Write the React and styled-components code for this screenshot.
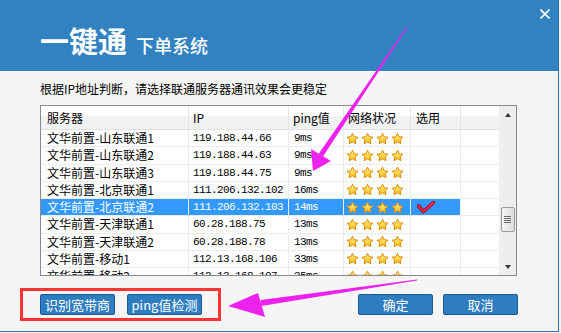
import React from 'react'
import styled, { createGlobalStyle } from 'styled-components'

const blue = '#3282c1'
const cjk = '"Noto Sans CJK SC", "Noto Sans", sans-serif'
const mono = '"Liberation Mono", "DejaVu Sans Mono", monospace'
const cols = '147px 100px 55px 67px 50px 39px'

const Global = createGlobalStyle`
  body {
    margin: 0;
    background: #f2f2f2;
    font-family: ${cjk};
  }
`

const Dialog = styled.div`
  position: relative;
  width: 559px;
  height: 332px;
  box-sizing: border-box;
  border-right: 1px solid #2a6fb0;
  border-bottom: 1px solid #2a78bd;
  background: #f5f5f5;
  display: flex;
  flex-direction: column;
`

const Header = styled.header`
  flex: none;
  height: 71px;
  box-sizing: border-box;
  padding-left: 40px;
  background: ${blue};
  display: flex;
  justify-content: space-between;
  align-items: flex-start;
`

const Title = styled.div`
  margin-top: 24px;
  display: flex;
  align-items: baseline;
  gap: 9px;
  color: #fff;
`

const BigTitle = styled.span`
  font-size: 29px;
  line-height: 32px;
  font-weight: 700;
`

const SubTitle = styled.span`
  font-size: 18px;
  line-height: 22px;
  font-weight: 500;
`

const Close = styled.div`
  margin: 9px 8px 0 0;
  width: 10px;
  height: 10px;
  svg {
    display: block;
  }
`

const Main = styled.div`
  padding: 10px 0 0 40px;
`

const Notice = styled.p`
  margin: 0;
  font-size: 12px;
  line-height: 16px;
  color: #000;
`

const Table = styled.div`
  margin-top: 8px;
  width: 477px;
  height: 171px;
  box-sizing: border-box;
  border: 1px solid #858991;
  background: #fff;
  display: flex;
`

const List = styled.div`
  flex: 1;
  overflow: hidden;
`

const HeadRow = styled.div`
  display: grid;
  grid-template-columns: ${cols};
  height: 24px;
  box-sizing: border-box;
  border-bottom: 1px solid #e2e2e2;
  background: linear-gradient(#ffffff 0, #ffffff 45%, #f1f2f4 45%, #f1f2f4 100%);
`

const HeadCell = styled.div`
  padding-left: ${p => p.$pad}px;
  border-left: ${p => (p.$first ? 'none' : '1px solid #e5e5e5')};
  font-size: 12px;
  line-height: 23px;
  color: #000;
  white-space: nowrap;
`

const Row = styled.div`
  display: grid;
  grid-template-columns: ${cols};
  height: 17.25px;
  box-sizing: border-box;
  border-bottom: 1px solid #ececec;
`

const Cell = styled.div`
  padding-left: ${p => p.$pad}px;
  border-left: ${p => (p.$first ? 'none' : '1px solid #ececec')};
  background: ${p => (p.$sel ? '#3399ff' : 'transparent')};
  color: ${p => (p.$sel ? '#fff' : '#000')};
  font-family: ${p => (p.$mono ? mono : cjk)};
  font-size: ${p => (p.$mono ? '11px' : '12px')};
  letter-spacing: ${p => (p.$mono ? '-0.6px' : '0')};
  line-height: 16px;
  white-space: nowrap;
  display: flex;
  align-items: center;
  gap: 2px;
  overflow: hidden;
`

const Scrollbar = styled.div`
  flex: none;
  width: 17px;
  background: #eeeeee;
  display: flex;
  flex-direction: column;
  align-items: center;
`

const Arrow = styled.div`
  width: 0;
  height: 0;
  border-left: 3.5px solid transparent;
  border-right: 3.5px solid transparent;
  ${p =>
    p.$down
      ? 'border-top: 4px solid #333; margin-top: 33px;'
      : 'border-bottom: 4px solid #333; margin-top: 7px;'}
`

const Thumb = styled.div`
  margin-top: 90px;
  width: 14px;
  height: 25px;
  box-sizing: border-box;
  border: 1px solid #9a9a9a;
  border-radius: 2px;
  background: linear-gradient(to right, #f4f4f4, #dcdcdc);
  display: flex;
  flex-direction: column;
  align-items: center;
  justify-content: center;
  gap: 1px;
`

const Grip = styled.div`
  width: 7px;
  height: 1px;
  background: #6a6a6a;
`

const Footer = styled.div`
  margin-top: 12px;
  padding: 0 40px 0 20px;
  display: flex;
  justify-content: space-between;
  align-items: center;
`

const Marked = styled.div`
  border: 3px solid #ff3535;
  padding: 3px 16px 3px 17px;
  display: flex;
  gap: 12px;
`

const Group = styled.div`
  display: flex;
  gap: 10px;
`

const Button = styled.button`
  width: 75px;
  height: 21px;
  padding: 0;
  box-sizing: border-box;
  border: 1px solid #1a5a98;
  border-radius: 2px;
  background: #2f7dc1;
  color: #fff;
  font-family: ${cjk};
  font-size: 13px;
  line-height: 19px;
`

const Overlay = styled.svg`
  position: absolute;
  left: 0;
  top: 0;
  pointer-events: none;
`

const Star = () => (
  <svg width="13" height="13" viewBox="-0.5 -0.5 13 13">
    <defs>
      <linearGradient id="sg" x1="0" y1="0" x2="0" y2="1">
        <stop offset="0" stopColor="#fff38a" />
        <stop offset="1" stopColor="#ffbd12" />
      </linearGradient>
    </defs>
    <polygon
      points="6,0.7 7.65,4.23 11.52,4.71 8.66,7.37 9.41,11.19 6,9.3 2.59,11.19 3.34,7.37 0.48,4.71 4.35,4.23"
      fill="url(#sg)"
      stroke="#e48a0a"
      strokeWidth="1"
      strokeLinejoin="round"
    />
  </svg>
)

const Check = () => (
  <svg width="18" height="13" viewBox="0 0 18 13">
    <polyline points="1.5,5 6.5,10.5 16.5,1.5" fill="none" stroke="#a8001a" strokeWidth="3.6" strokeLinecap="round" strokeLinejoin="round" />
    <polyline points="1.5,5 6.5,10.5 16.5,1.5" fill="none" stroke="#f0284a" strokeWidth="1.8" strokeLinecap="round" strokeLinejoin="round" />
  </svg>
)

const servers = [
  ['文华前置-山东联通1', '119.188.44.66', '9ms'],
  ['文华前置-山东联通2', '119.188.44.63', '9ms'],
  ['文华前置-山东联通3', '119.188.44.75', '9ms'],
  ['文华前置-北京联通1', '111.206.132.102', '16ms'],
  ['文华前置-北京联通2', '111.206.132.103', '14ms'],
  ['文华前置-天津联通1', '60.28.188.75', '13ms'],
  ['文华前置-天津联通2', '60.28.188.78', '13ms'],
  ['文华前置-移动1', '112.13.168.106', '33ms'],
  ['文华前置-移动2', '112.13.168.107', '35ms'],
]

const selected = 4

export default function App() {
  return (
    <>
      <Global />
      <Dialog>
        <Header>
          <Title>
            <BigTitle>一键通</BigTitle>
            <SubTitle>下单系统</SubTitle>
          </Title>
          <Close>
            <svg width="10" height="10" viewBox="0 0 10 10">
              <path d="M0.5 0.5 L9.5 9.5 M9.5 0.5 L0.5 9.5" stroke="#fff" strokeWidth="1.6" />
            </svg>
          </Close>
        </Header>

        <Main>
          <Notice>根据IP地址判断，请选择联通服务器通讯效果会更稳定</Notice>
          <Table>
            <List>
              <HeadRow>
                <HeadCell $first $pad={6}>服务器</HeadCell>
                <HeadCell $pad={4}>IP</HeadCell>
                <HeadCell $pad={4}>ping值</HeadCell>
                <HeadCell $pad={4}>网络状况</HeadCell>
                <HeadCell $pad={5}>选用</HeadCell>
                <HeadCell />
              </HeadRow>
              {servers.map(([name, ip, ping], i) => {
                const sel = i === selected
                return (
                  <Row key={name}>
                    <Cell $first $pad={6} $sel={sel}>{name}</Cell>
                    <Cell $pad={4} $mono $sel={sel}>{ip}</Cell>
                    <Cell $pad={5} $mono $sel={sel}>{ping}</Cell>
                    <Cell $pad={2} $sel={sel}>
                      <Star /><Star /><Star /><Star />
                    </Cell>
                    <Cell $pad={6} $sel={sel}>{sel && <Check />}</Cell>
                    <Cell />
                  </Row>
                )
              })}
            </List>
            <Scrollbar>
              <Arrow />
              <Thumb>
                <Grip /><Grip /><Grip /><Grip />
              </Thumb>
              <Arrow $down />
            </Scrollbar>
          </Table>
        </Main>

        <Footer>
          <Marked>
            <Button>识别宽带商</Button>
            <Button>ping值检测</Button>
          </Marked>
          <Group>
            <Button>确定</Button>
            <Button>取消</Button>
          </Group>
        </Footer>

        <Overlay width="561" height="333" viewBox="0 0 561 333">
          <polygon points="406.6,27 407.4,27.6 323,156.4 318.9,153.6" fill="#ee22ee" />
          <polygon points="313,171 311,149 331,161" fill="#ee22ee" />
          <polygon points="417,279.5 417,280.5 261.4,306 260.6,300" fill="#ee22ee" />
          <polygon points="228,306 258,293 265,317" fill="#ee22ee" />
        </Overlay>
      </Dialog>
    </>
  )
}
